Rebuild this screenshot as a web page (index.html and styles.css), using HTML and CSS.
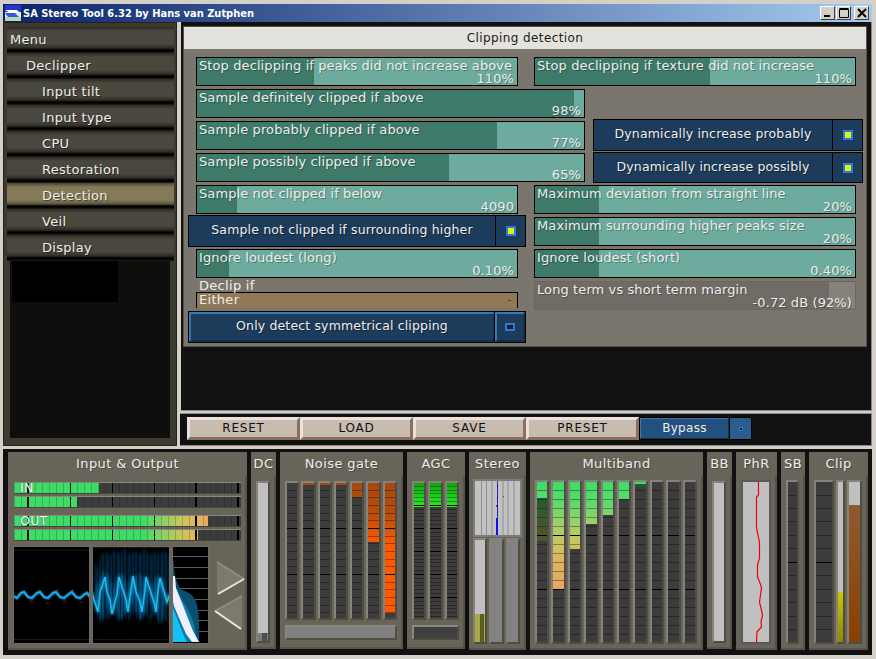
FILE: index.html
```html
<!DOCTYPE html>
<html lang="en">
<head>
    <meta charset="UTF-8">
    <title>SA Stereo Tool 6.32 by Hans van Zutphen</title>
    <link rel="stylesheet" href="styles.css">
</head>
<body>
<div class="window">
    <div class="titlebar">
        <svg class="app-icon" width="16" height="16" viewBox="0 0 16 16">
            <rect width="16" height="16" fill="#e8e8e8"/>
            <rect width="16" height="7" fill="#2a35c8"/>
            <path d="M0 5h12l3 3H5z" fill="#fff"/>
            <path d="M0 8h10l4 4H3z" fill="#3a55d8"/>
            <rect y="12" width="16" height="4" fill="#b8d8b0"/>
        </svg>
        <span class="title-text">SA Stereo Tool 6.32 by Hans van Zutphen</span>
        <div class="win-btns">
            <div class="win-btn"><svg width="10" height="10" viewBox="0 0 10 10"><rect x="1" y="7" width="6" height="2" fill="#000"/></svg></div>
            <div class="win-btn"><svg width="10" height="10" viewBox="0 0 10 10"><path d="M0.5 1.5h9v8h-9zM0.5 0.5h9" fill="none" stroke="#000"/></svg></div>
            <div class="win-btn close"><svg width="10" height="10" viewBox="0 0 10 10"><path d="M1 1l8 8M9 1l-8 8" stroke="#000" stroke-width="2"/></svg></div>
        </div>
    </div>

    <div class="upper">
        <div class="menu">
            <div class="menu-item lvl0">Menu</div>
            <div class="menu-item lvl1">Declipper</div>
            <div class="menu-item lvl2">Input tilt</div>
            <div class="menu-item lvl2">Input type</div>
            <div class="menu-item lvl2">CPU</div>
            <div class="menu-item lvl2">Restoration</div>
            <div class="menu-item lvl2 active">Detection</div>
            <div class="menu-item lvl2">Veil</div>
            <div class="menu-item lvl2">Display</div>
            <div class="menu-empty"><div class="menu-hole"></div></div>
        </div>

        <div class="main">
            <div class="page-area">
                <div class="page">
                    <div class="page-title">Clipping detection</div>
                    <div class="controls">
                        <div class="slider col-left" style="--pct:36.6%">
                            <span>Stop declipping if peaks did not increase above</span><span class="val">110%</span>
                        </div>
                        <div class="slider col-right" style="--pct:54.7%">
                            <span>Stop declipping if texture did not increase</span><span class="val">110%</span>
                        </div>
                        <div class="slider col-wide row-2" style="--pct:97.4%">
                            <span>Sample definitely clipped if above</span><span class="val">98%</span>
                        </div>
                        <div class="slider col-wide row-3" style="--pct:77.5%">
                            <span>Sample probably clipped if above</span><span class="val">77%</span>
                        </div>
                        <div class="toggle col-side row-3 up2">
                            <div class="toggle-label">Dynamically increase probably</div>
                            <div class="toggle-box"><i class="led on"></i></div>
                        </div>
                        <div class="slider col-wide row-4" style="--pct:65%">
                            <span>Sample possibly clipped if above</span><span class="val">65%</span>
                        </div>
                        <div class="toggle col-side row-4 up1">
                            <div class="toggle-label">Dynamically increase possibly</div>
                            <div class="toggle-box"><i class="led on"></i></div>
                        </div>
                        <div class="slider col-left row-5" style="--pct:12.5%">
                            <span>Sample not clipped if below</span><span class="val">4090</span>
                        </div>
                        <div class="slider col-right row-5" style="--pct:20%">
                            <span>Maximum deviation from straight line</span><span class="val">20%</span>
                        </div>
                        <div class="toggle col-over row-6 up2">
                            <div class="toggle-label">Sample not clipped if surrounding higher</div>
                            <div class="toggle-box"><i class="led on"></i></div>
                        </div>
                        <div class="slider col-right row-6" style="--pct:20%">
                            <span>Maximum surrounding higher peaks size</span><span class="val">20%</span>
                        </div>
                        <div class="slider col-left row-7" style="--pct:10%">
                            <span>Ignore loudest (long)</span><span class="val">0.10%</span>
                        </div>
                        <div class="slider col-right row-7" style="--pct:20%">
                            <span>Ignore loudest (short)</span><span class="val">0.40%</span>
                        </div>
                        <div class="select-wrap col-left row-8">
                            <div class="select-label">Declip if</div>
                            <div class="select"><span>Either</span><span class="select-mark">-</span></div>
                        </div>
                        <div class="slider grey col-right row-8" style="--pct:92%">
                            <span>Long term vs short term margin</span><span class="val">-0.72 dB (92%)</span>
                        </div>
                        <div class="toggle lit col-over row-9 up2">
                            <div class="toggle-label">Only detect symmetrical clipping</div>
                            <div class="toggle-box"><i class="led off"></i></div>
                        </div>
                    </div>
                </div>
            </div>
            <div class="toolbar">
                <button class="tool-btn">RESET</button>
                <button class="tool-btn">LOAD</button>
                <button class="tool-btn">SAVE</button>
                <button class="tool-btn">PRESET</button>
                <div class="bypass">
                    <div class="bypass-label">Bypass</div>
                    <div class="bypass-box"><i></i></div>
                </div>
            </div>
        </div>
    </div>

    <div class="meters">
        <section class="panel p-io">
            <h3>Input &amp; Output</h3>
            <div class="panel-body io-body">
                <div class="hmeter"><div class="hfill" style="width:85px"></div><span class="tag">IN</span></div>
                <div class="hmeter"><div class="hfill" style="width:63px"></div></div>
                <div class="hmeter gap"><div class="hfill" style="width:194px"></div><span class="tag">OUT</span></div>
                <div class="hmeter"><div class="hfill" style="width:184px"></div></div>
                <div class="scopes">
                    <svg class="scope" width="77" height="98" viewBox="0 0 77 98">
                        <rect width="77" height="98" fill="#000"/>
                        <path d="M0 4.5h77M0 93.5h77" stroke="#1c1c1c"/>
                        <path d="M8 44h3v3H8zM16 53h4v3h-4zM25 43h2v3h-2zM33 56h3v2h-3zM42 43h4v2h-4zM50 54h3v3h-3zM59 43h2v3h-2zM66 55h4v2h-4z" fill="#3a0808"/>
                        <polyline points="0,50 4,52 8,47 11,46 15,51 19,52 24,47 27,46 31,51 35,52 40,47 43,46 47,51 51,52 56,48 59,46 63,51 67,52 72,48 74,47 77,51" fill="none" stroke="#0b5f8e" stroke-width="3.5"/>
                        <polyline points="0,50 4,52 8,47 11,46 15,51 19,52 24,47 27,46 31,51 35,52 40,47 43,46 47,51 51,52 56,48 59,46 63,51 67,52 72,48 74,47 77,51" fill="none" stroke="#1fb4e8" stroke-width="1.5"/>
                    </svg>
                    <svg class="scope" width="78" height="98" viewBox="0 0 78 98">
                        <defs>
                            <filter id="soft"><feGaussianBlur stdDeviation="1.6"/></filter>
                            <pattern id="stripes" width="11" height="98" patternUnits="userSpaceOnUse">
                                <path d="M1 0h2v98H1zM6 0h1v98H6zM9 0h1v98H9z" fill="#000" opacity=".55"/>
                            </pattern>
                        </defs>
                        <rect width="78" height="98" fill="#000"/>
                        <path d="M0 1.5h78M0 93.5h78" stroke="#1c1c1c"/>
                        <path d="M0 10l5 14 4-16 5-3 4 6 4-8 6 5 5-7 4 8 5-4 6 3 5-6 5 7 5-4 5 3 5-5 5 8v68l-5-6-4 4-6-9-5 8-6-10-5 9-5-8-5 9-6-8-5 9-5-9-5 6-5-4-5 7z" fill="#032038" filter="url(#soft)"/>
                        <path d="M0 26l4 16 5-14 4-4 5 8 4 11 4-14 4-3 5 9 4 9 5-15 4-2 5 10 5 7 5-13 4-3 5 8v26l-4 18-4-14-5-12-5 12-5 9-5-10-5-11-5 11-5 10-5-10-5-10-5 9-4 13-5-15z" fill="#064a76" filter="url(#soft)"/>
                        <rect width="78" height="98" fill="url(#stripes)"/>
                        <polyline points="0,46 2,54 6,66 8,46 13,31 15,46 18,54 20,68 25,48 27,31 31,44 34,54 36,66 39,44 41,30 44,46 48,56 50,66 53,44 54,31 58,44 62,56 64,66 66,44 68,32 72,46 75,56 78,48" fill="none" stroke="#0e7eb2" stroke-width="3" filter="url(#soft)"/>
                        <polyline points="0,46 2,54 6,66 8,46 13,31 15,46 18,54 20,68 25,48 27,31 31,44 34,54 36,66 39,44 41,30 44,46 48,56 50,66 53,44 54,31 58,44 62,56 64,66 66,44 68,32 72,46 75,56 78,48" fill="none" stroke="#1fbcec" stroke-width="1.4"/>
                    </svg>
                    <svg class="scope" width="37" height="98" viewBox="0 0 37 98">
                        <rect width="37" height="98" fill="#000"/>
                        <path d="M0 10.5h37M0 21.5h37M0 32.5h37M0 42.5h37M0 53.5h37M0 64.5h37M0 74.5h37M0 85.5h37" stroke="#5c5c5c"/>
                        <path d="M1 13l2 17 2 6 3 7 7 3 5 3 4 6 2 9 1 11v21H1z" fill="#0a4f72"/>
                        <path d="M1 44h4l4 8 5 8 4 8 4 10 3 18H1z" fill="#0d7ca6"/>
                        <path d="M1 30h2l1 12 4 10 4 10 5 13 4 10 6 11h-7l-6-8-7-16-5-12-1-5z" fill="#eef0ff"/>
                        <path d="M1 62l5 13 6 15 3 6H1z" fill="#12c2f8"/>
                    </svg>
                    <svg class="nudge" width="34" height="70" viewBox="0 0 34 70">
                        <path d="M5 1l27 17-27 16z" fill="#7d796f"/>
                        <path d="M5 1l27 17" fill="none" stroke="#908c82" stroke-width="2"/>
                        <path d="M6 33l26-15" fill="none" stroke="#e8e8e0" stroke-width="2"/>
                        <path d="M30 35L3 50l27 18z" fill="#7d796f"/>
                        <path d="M3 50l27-15" fill="none" stroke="#908c82" stroke-width="2"/>
                        <path d="M3 50l26 18" fill="none" stroke="#e8e8e0" stroke-width="2"/>
                    </svg>
                </div>
            </div>
        </section>

        <section class="panel p-dc">
            <h3>DC</h3>
            <div class="panel-body">
                <div class="vmeter light tall"><div class="dc-mark"></div></div>
            </div>
        </section>

        <section class="panel p-ng">
            <h3>Noise gate</h3>
            <div class="panel-body stack">
                <div class="bank ng">
                    <div class="vmeter"></div>
                    <div class="vmeter"><div class="fill" style="height:2px"></div></div>
                    <div class="vmeter"><div class="fill" style="height:2px"></div></div>
                    <div class="vmeter"><div class="fill" style="height:2px"></div></div>
                    <div class="vmeter"><div class="fill" style="height:14px"></div></div>
                    <div class="vmeter"><div class="fill" style="height:59px"></div></div>
                    <div class="vmeter"><div class="fill" style="height:130px"></div></div>
                </div>
                <div class="wide-bar"></div>
            </div>
        </section>

        <section class="panel p-agc">
            <h3>AGC</h3>
            <div class="panel-body stack">
                <div class="bank agc">
                    <div class="vmeter"><div class="fill" style="height:24px"></div></div>
                    <div class="vmeter"><div class="fill" style="height:24px"></div></div>
                    <div class="vmeter"><div class="fill" style="height:24px"></div></div>
                </div>
                <div class="wide-bar dark"></div>
            </div>
        </section>

        <section class="panel p-st">
            <h3>Stereo</h3>
            <div class="panel-body stack st-body">
                <svg class="st-scope" width="49" height="58" viewBox="0 0 49 58">
                    <rect x="1" y="1" width="47" height="56" fill="#c2c2c2" stroke="#7c7c7c" stroke-width="2"/>
                    <path d="M8.5 2v54M13.5 2v54M19 2v54M24.5 2v54M30 2v54M35 2v54M41 2v54" stroke="#8e8e8e"/>
                    <rect x="24" y="2" width="1" height="38" fill="#1a1ae0"/>
                    <rect x="23" y="39" width="2" height="17" fill="#1010f0"/>
                    <rect x="23" y="26" width="2" height="2" fill="#2020c0"/>
                    <rect x="24" y="3" width="1" height="2" fill="#f01010"/>
                    <rect x="24" y="14" width="1" height="1" fill="#f01010"/>
                    <rect x="30" y="17" width="1" height="1" fill="#f01010"/>
                    <rect x="24" y="24" width="1" height="1" fill="#f01010"/>
                    <rect x="23" y="27" width="1" height="1" fill="#f01010"/>
                    <rect x="24" y="37" width="1" height="1" fill="#f01010"/>
                </svg>
                <div class="st-bars">
                    <div class="vmeter light bottom"><div class="st-fill"></div></div>
                    <div class="vmeter grey-off"></div>
                    <div class="vmeter grey-off"></div>
                </div>
            </div>
        </section>

        <section class="panel p-mb">
            <h3>Multiband</h3>
            <div class="panel-body">
                <div class="bank mb tall">
                    <div class="vmeter"><div class="fill" style="height:59px"><div class="dim" style="margin-top:16px"></div></div></div>
                    <div class="vmeter"><div class="fill" style="height:107px"></div></div>
                    <div class="vmeter"><div class="fill" style="height:67px"></div></div>
                    <div class="vmeter"><div class="fill" style="height:42px"></div></div>
                    <div class="vmeter"><div class="fill" style="height:33px"></div></div>
                    <div class="vmeter"><div class="fill" style="height:17px"></div></div>
                    <div class="vmeter"><div class="fill" style="height:5px"><div class="dim" style="margin-top:2px"></div></div></div>
                    <div class="vmeter"></div>
                    <div class="vmeter"></div>
                    <div class="vmeter"></div>
                </div>
            </div>
        </section>

        <section class="panel p-bb">
            <h3>BB</h3>
            <div class="panel-body">
                <div class="vmeter light tall"></div>
            </div>
        </section>

        <section class="panel p-phr">
            <h3>PhR</h3>
            <div class="panel-body">
                <div class="phr tall">
                    <svg width="29" height="161" viewBox="0 0 29 161">
                        <polyline points="15.5,0 15.5,13 13.5,15 13.5,45 14.5,51 16.5,60 16.5,76 14.5,83 14.5,95 17,101 18.5,106 16.5,120 18,126 19.5,133 18,140 18.5,145 14,150 13.5,160 14.5,161" fill="none" stroke="#f00000" stroke-width="1.2"/>
                    </svg>
                </div>
            </div>
        </section>

        <section class="panel p-sb">
            <h3>SB</h3>
            <div class="panel-body">
                <div class="bank sparse tall"><div class="vmeter"></div></div>
            </div>
        </section>

        <section class="panel p-clip">
            <h3>Clip</h3>
            <div class="panel-body clip-body">
                <div class="bank sparse tall clip-main"><div class="vmeter"></div></div>
                <div class="vmeter light bottom tall clip-mid"><div class="clip-yellow"></div></div>
                <div class="vmeter light bottom tall clip-right"><div class="clip-brown"></div></div>
            </div>
        </section>
    </div>
</div>
</body>
</html>
```
FILE: styles.css
```css
* {
    box-sizing: border-box;
}
body {
    margin: 0;
    background: #d4d0c8;
    font-family: 'DejaVu Sans', sans-serif;
    font-size: 12px;
    letter-spacing: 0.3px;
    color: #eeeeea;
}
.window {
    width: 876px;
    height: 659px;
    padding: 4px 4px 4px 3px;
    display: flex;
    flex-direction: column;
    overflow: hidden;
}

/* title bar */
.titlebar {
    height: 18px;
    display: flex;
    align-items: center;
    padding-left: 2px;
    background: linear-gradient(to right, #0a246a, #a6caf0);
    flex: none;
}
.app-icon {
    flex: none;
}
.title-text {
    margin-left: 2px;
    font-family: 'DejaVu Sans Condensed', 'DejaVu Sans', sans-serif;
    font-stretch: condensed;
    font-weight: bold;
    font-size: 11px;
    letter-spacing: 0;
    color: #fff;
}
.win-btns {
    margin-left: auto;
    margin-right: 3px;
    display: flex;
    gap: 1px;
}
.win-btn {
    width: 15px;
    height: 14px;
    display: flex;
    align-items: center;
    justify-content: center;
    background: #d4d0c8;
    border: 1px solid;
    border-color: #fff #404040 #404040 #fff;
}
.win-btn.close {
    margin-left: 2px;
}

.upper {
    display: flex;
    height: 424px;
    flex: none;
    gap: 3px;
}

/* left menu */
.menu {
    width: 174px;
    background: #3d3a31;
    border: 1px solid #23221c;
    padding: 4px 2px 7px 3px;
    display: flex;
    flex-direction: column;
}
.menu-item {
    height: 26px;
    flex: none;
    line-height: 26px;
    font-size: 13px;
    text-shadow: 1px 1px 0 rgba(0, 0, 0, 0.45);
    background: linear-gradient(to bottom, #2b2922 0, #4a473e 4px, #4a473e 17px, #2e2c25 21px, #000 23px, #000 24px, #22201a 26px);
}
.menu-item.active {
    background: linear-gradient(to bottom, #4a4636 0, #857a58 4px, #857a58 17px, #5c5540 21px, #000 23px, #000 24px, #22201a 26px);
}
.lvl0 {
    padding-left: 3px;
}
.lvl1 {
    padding-left: 19px;
}
.lvl2 {
    padding-left: 35px;
}
.menu-empty {
    flex: 1;
    margin: 0 4px 0 3px;
    padding-left: 2px;
    background: #0e0e0c;
}
.menu-hole {
    width: 106px;
    height: 41px;
    background: #000;
}

/* right side */
.main {
    width: 692px;
    display: flex;
    flex-direction: column;
}
.page-area {
    height: 389px;
    padding: 4px 4px 0 2px;
    background: #111;
    border: 1px solid #8a8a86;
    border-left-color: #d4d0c8;
    border-top: 0;
    flex: none;
}
.page {
    height: 321px;
    background: #7a766d;
    border: 1px solid #55524a;
}
.page-title {
    height: 22px;
    line-height: 22px;
    text-align: center;
    background: #e4e2dc;
    color: #1c1c1c;
    font-size: 12px;
    letter-spacing: 0.4px;
}
.controls {
    display: grid;
    grid-template-columns: 8px 322px 8px 8px 51px 8px 263px 7px;
    grid-auto-rows: 29px;
    row-gap: 3px;
    padding: 8px 0 0 4px;
}

.slider {
    display: flex;
    flex-direction: column;
    justify-content: space-between;
    padding: 1px 3px 0 2px;
    border: 1px solid #000;
    font-size: 13px;
    letter-spacing: 0.1px;
    line-height: 13px;
    text-shadow: 1px 1px 0 rgba(0, 0, 0, 0.3);
    white-space: nowrap;
    background: linear-gradient(to right, #3d7a69 var(--pct), #6dab9e var(--pct));
}
.slider .val {
    text-align: right;
}
.slider.grey {
    border-color: #6b675f;
    background: linear-gradient(to right, #6f6c66 var(--pct), #85827c var(--pct));
}
.col-left {
    grid-column: 2 / 3;
}
.col-right {
    grid-column: 5 / 8;
}
.col-wide {
    grid-column: 2 / 6;
}
.col-side {
    grid-column: 7 / 9;
}
.col-over {
    grid-column: 1 / 4;
}
.row-2 { grid-row: 2; }
.row-3 { grid-row: 3; }
.row-4 { grid-row: 4; }
.row-5 { grid-row: 5; }
.row-6 { grid-row: 6; }
.row-7 { grid-row: 7; }
.row-8 { grid-row: 8; }
.row-9 { grid-row: 9; }

.toggle {
    display: flex;
    border: 1px solid #000;
    background: #1d3b5a;
    margin-bottom: -1px;
    font-size: 12.5px;
    letter-spacing: 0.15px;
}
.up1 {
    margin-top: -1px;
}
.up2 {
    margin-top: -2px;
}
.toggle-label {
    flex: 1;
    text-align: center;
    line-height: 28px;
    white-space: nowrap;
    text-shadow: 1px 1px 0 rgba(0, 0, 0, 0.4);
}
.toggle-box {
    width: 30px;
    flex: none;
    border-left: 1px solid #000;
    display: flex;
    align-items: center;
    justify-content: center;
}
.toggle.lit .toggle-label,
.toggle.lit .toggle-box {
    border: 2px solid;
    border-color: #3b78ad #17304a #17304a #3b78ad;
    line-height: 24px;
}
.toggle.lit .toggle-box {
    border-left: 2px solid #3b78ad;
    box-shadow: -1px 0 0 #000;
}
.led {
    display: block;
    width: 10px;
    height: 10px;
    background: #16202c;
    border: 2px solid #2a7ad8;
}
.led.on {
    background: #e6f80a;
}
.led.off {
    height: 8px;
}

.select-wrap {
    margin-top: -2px;
    font-size: 13px;
}
.select-label {
    line-height: 13px;
    height: 13px;
    padding-left: 3px;
    color: #f0f0ea;
}
.select {
    height: 16px;
    display: flex;
    justify-content: space-between;
    padding: 0 5px 0 2px;
    border: 1px solid #000;
    border-bottom: 0;
    background: #8f7957;
    line-height: 13px;
}
.select-mark {
    color: #4a4030;
}

/* reset row */
.toolbar {
    height: 33px;
    margin-top: 2px;
    padding: 3px 0 0 7px;
    display: flex;
    align-items: flex-start;
    background: #111;
    border-top: 1px solid #8a8a86;
    border-right: 1px solid #8a8a86;
    border-bottom: 1px solid #8a8a86;
}
.tool-btn {
    width: 113px;
    height: 23px;
    padding: 0 0 1px 0;
    margin: 0;
    border: 3px solid;
    border-color: #eae2da #8b6f5c #8b6f5c #eae2da;
    background: #c8bbb0;
    color: #111;
    font-family: inherit;
    font-size: 12px;
    letter-spacing: 0.8px;
}
.bypass {
    display: flex;
    height: 23px;
    border: 1px solid #000;
    background: #23507e;
}
.bypass-label {
    width: 89px;
    line-height: 19px;
    text-align: center;
    border: 1px solid;
    border-color: #3b78ad #17304a #17304a #3b78ad;
}
.bypass-box {
    width: 22px;
    display: flex;
    align-items: center;
    justify-content: center;
    background: #2a5d8e;
    border-left: 1px solid #000;
}
.bypass-box i {
    display: block;
    width: 4px;
    height: 4px;
    background: #16202c;
    border: 1px solid #2a7ad8;
}

/* bottom meter strip */
.meters {
    height: 206px;
    margin-top: 3px;
    padding: 3px 3px 6px 5px;
    flex: none;
    display: flex;
    gap: 4px;
    background: #111;
}
.panel {
    flex: none;
    display: flex;
    flex-direction: column;
    background: #68645a;
}
.panel h3 {
    margin: 0;
    height: 24px;
    line-height: 23px;
    font-size: 13px;
    font-weight: normal;
    text-align: center;
    white-space: nowrap;
    letter-spacing: 0.4px;
    text-shadow: 1px 1px 0 rgba(0, 0, 0, 0.3);
}
.panel-body {
    flex: 1;
    padding: 5px 4px 4px 5px;
    border-right: 2px solid #56534a;
    border-bottom: 2px solid #56534a;
}
.p-io { width: 239px; }
.p-dc { width: 25px; }
.p-ng { width: 123px; }
.p-agc { width: 58px; }
.p-st { width: 57px; }
.p-mb { width: 173px; }
.p-bb { width: 25px; }
.p-phr { width: 41px; }
.p-sb { width: 24px; }
.p-clip { width: 59px; }

.tall {
    height: 164px;
}
.stack {
    display: flex;
    flex-direction: column;
}

.hmeter {
    position: relative;
    width: 227px;
    height: 12px;
    margin-bottom: 2px;
    background: #3c3c3c;
    border-top: 1px solid #8b877c;
    border-bottom: 1px solid #49463e;
}
.hmeter.gap {
    margin-top: 7px;
}
.hmeter::after {
    content: "";
    position: absolute;
    inset: 0;
    background:
        repeating-linear-gradient(to right, transparent 0 13.5px, #000 13.5px 15px, transparent 15px 42px),
        repeating-linear-gradient(to right, rgba(0, 0, 0, 0.2) 0 1px, transparent 1px 7px);
}
.hfill {
    height: 100%;
    background: linear-gradient(to right, #3cdc66 0, #3cdc66 130px, #8ed264 150px, #cfc45c 170px, #e6ae5e 190px, #e89d62 227px);
    background-size: 227px 100%;
}
.tag {
    position: absolute;
    left: 6px;
    top: -2px;
    z-index: 1;
    font-size: 12.5px;
    line-height: 13px;
    color: #fff;
    text-shadow: 0 0 1px #1a4a28;
}
.io-body {
    padding: 7px 6px 4px 6px;
}
.scopes {
    display: flex;
    align-items: flex-start;
    gap: 2px;
    margin: 5px 0 0 -1px;
}
.scope {
    display: block;
    flex: none;
    outline: 1px solid #6e6b62;
    outline-offset: -1px;
}
.nudge {
    flex: none;
    margin: 15px 0 0 1px;
}

.vmeter {
    position: relative;
    display: block;
    flex: 1;
    min-width: 0;
    height: 100%;
    overflow: hidden;
    background: #3c3c3c;
    border: 2px solid;
    border-color: #86827a #4f4c44 #4f4c44 #86827a;
    --seg: 7.67px;
    --major: 46px;
}
.vmeter::after {
    content: "";
    position: absolute;
    inset: 0;
    background:
        repeating-linear-gradient(to bottom, transparent 0 calc(var(--major) - 1px), #000 calc(var(--major) - 1px) var(--major)),
        repeating-linear-gradient(to bottom, transparent 0 calc(var(--seg) - 1px), rgba(0, 0, 0, 0.35) calc(var(--seg) - 1px) var(--seg));
}
.vmeter.light {
    background: #c0c0c0;
}
.vmeter.light::after,
.vmeter.grey-off::after {
    display: none;
}
.vmeter.grey-off {
    background: #828282;
}
.vmeter.bottom {
    display: flex;
    flex-direction: column;
    justify-content: flex-end;
}
.fill {
    overflow: hidden;
}
.dim {
    height: 100%;
    background: rgba(0, 0, 0, 0.58);
}

.bank {
    display: flex;
    gap: 2px;
}
.bank.ng,
.bank.agc {
    height: 139px;
}
.bank.ng .fill {
    background: linear-gradient(to bottom, #a8480e 0, #b84c0c 30px, #fb5a00 60px, #ff5800 135px);
    background-size: 100% 135px;
}
.bank.agc .vmeter {
    --seg: 3.83px;
    --major: 23px;
}
.bank.agc .fill {
    background: linear-gradient(to bottom, #0ca80c, #26ee26);
}
.bank.mb .vmeter {
    --seg: 9px;
    --major: 54px;
}
.bank.mb .fill {
    background: linear-gradient(to bottom, #3ade68 0, #58da6c 18px, #9cd268 42px, #c9c660 60px, #deb25e 85px, #e8a462 110px);
    background-size: 100% 110px;
}
.bank.sparse .vmeter {
    --seg: 13.5px;
    --major: 81px;
}
.wide-bar {
    height: 15px;
    margin-top: 5px;
    background: #808080;
    border: 2px solid;
    border-color: #8c887e #4f4c44 #4f4c44 #8c887e;
}
.wide-bar.dark {
    background: #404040;
}

.dc-mark {
    position: absolute;
    left: 0;
    right: 0;
    bottom: 0;
    height: 8px;
    background: linear-gradient(to right, #7a7a7a 0 4px, #4e4e4e 4px 9px, #7a7a7a 9px);
}
.st-body {
    padding: 4px 4px 4px 4px;
}
.st-scope {
    display: block;
    flex: none;
}
.st-bars {
    display: flex;
    gap: 2px;
    height: 106px;
    margin-top: 1px;
}
.st-fill {
    height: 28px;
    background: linear-gradient(to right, #a8a848 0 5px, #5c5c20 5px 9px, #a8a848 9px);
}

.phr {
    background: #c0c0c0;
    border: 2px solid #5a5a5a;
    line-height: 0;
}
.clip-body {
    display: flex;
    gap: 2px;
    padding-right: 4px;
}
.clip-main {
    width: 20px;
    flex: none;
}
.clip-mid {
    width: 9px;
    flex: none;
}
.clip-right {
    width: 15px;
    flex: none;
}
.clip-yellow {
    height: 50px;
    background: linear-gradient(to bottom, #c8c800, #8a8a00);
}
.clip-brown {
    height: 137px;
    background: linear-gradient(to bottom, #8e5a32, #8a4000);
}
```
